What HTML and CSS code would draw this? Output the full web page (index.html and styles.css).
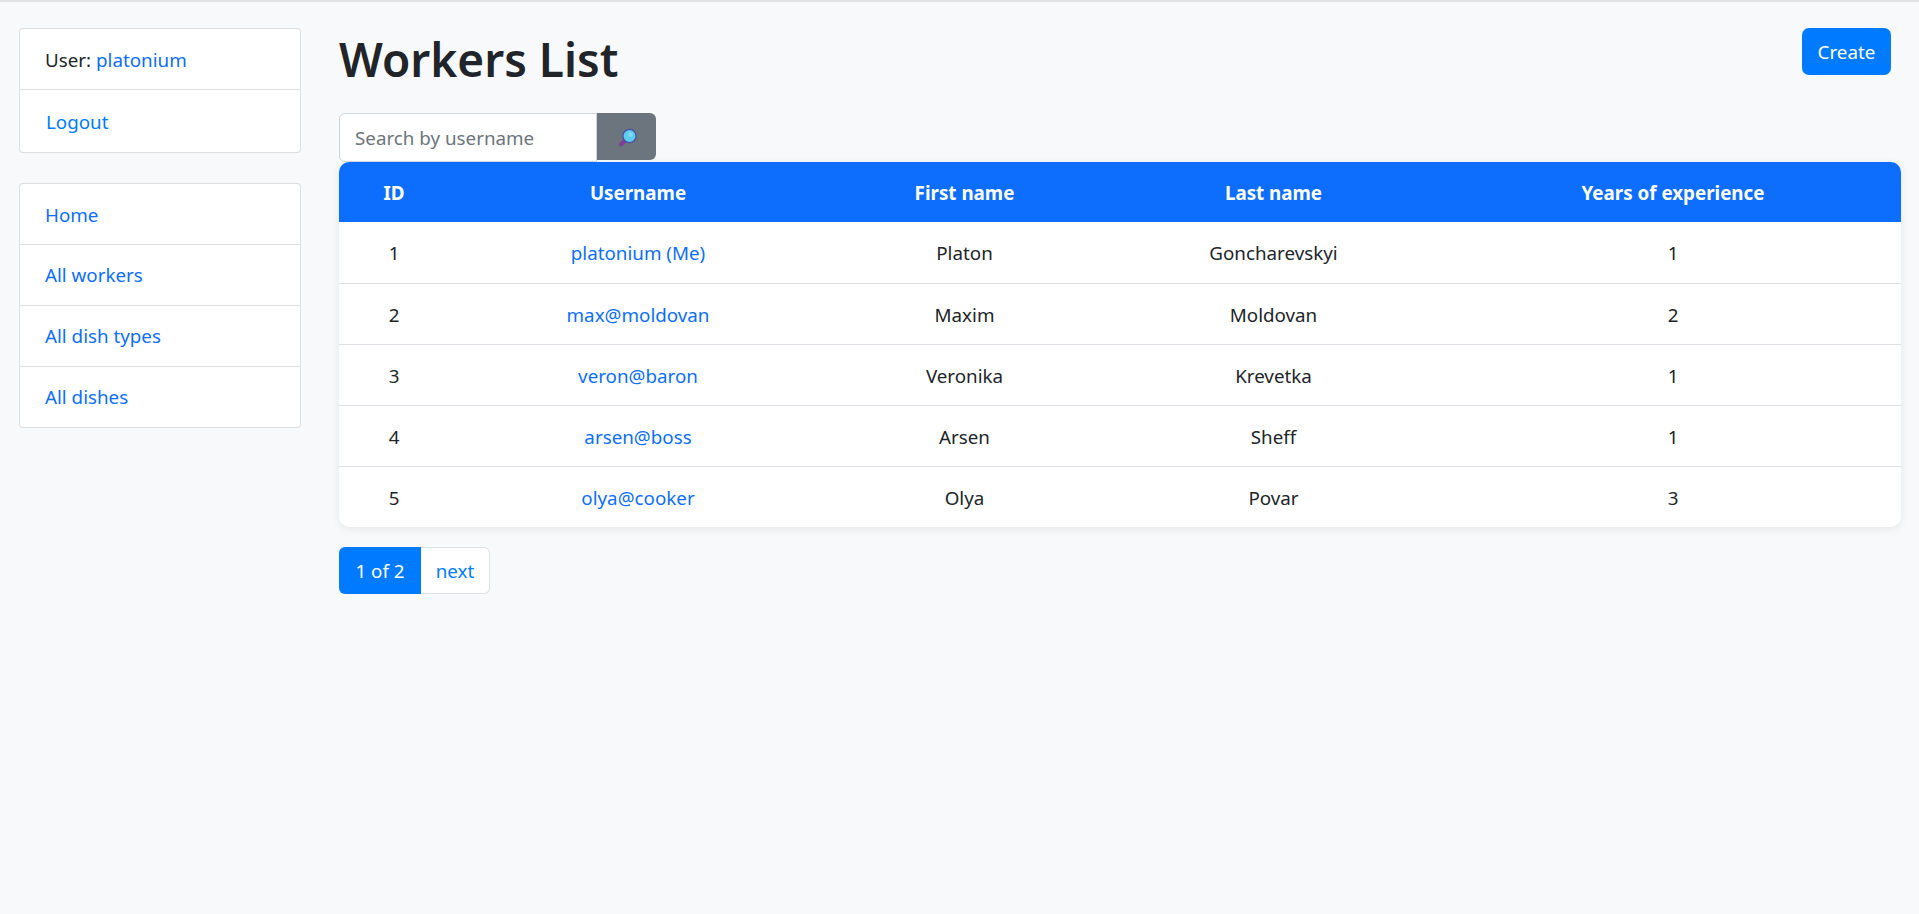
FILE: index.html
```html
<!DOCTYPE html>
<html lang="en">
<head>
<meta charset="utf-8">
<title>Workers List</title>
<link rel="stylesheet" href="styles.css">
</head>
<body>
<div class="page">
  <aside class="sidebar">
    <ul class="list-group">
      <li class="item">User: <a href="#">platonium</a></li>
      <li class="item item-tall"><a class="bright nudge" href="#">Logout</a></li>
    </ul>
    <ul class="list-group">
      <li class="item"><a href="#">Home</a></li>
      <li class="item"><a href="#">All workers</a></li>
      <li class="item"><a href="#">All dish types</a></li>
      <li class="item"><a href="#">All dishes</a></li>
    </ul>
  </aside>
  <main class="content">
    <div class="head">
      <h1 class="title">Workers List</h1>
      <a class="btn-create" href="#">Create</a>
    </div>
    <form class="search">
      <input class="search-input" type="text" placeholder="Search by username">
      <button class="search-btn" type="button" aria-label="Search">
        <svg width="24" height="24" viewBox="0 0 24 24">
          <path d="M10 15.5 L6 19.5" stroke="#7d3f96" stroke-width="4.2" stroke-linecap="round" fill="none"/>
          <circle cx="14.5" cy="11" r="6.6" fill="#5ccdf0" stroke="#4b4fa3" stroke-width="1.3"/>
          <circle cx="15.6" cy="9.6" r="2.4" fill="#7fdbf5"/>
        </svg>
      </button>
    </form>
    <div class="table-wrap">
      <table class="table">
        <colgroup>
          <col class="c1"><col class="c2"><col class="c3"><col class="c4"><col class="c5">
        </colgroup>
        <thead>
          <tr><th>ID</th><th>Username</th><th>First name</th><th>Last name</th><th>Years of experience</th></tr>
        </thead>
        <tbody>
          <tr><td>1</td><td><a href="#">platonium (Me)</a></td><td>Platon</td><td>Goncharevskyi</td><td>1</td></tr>
          <tr><td>2</td><td><a href="#">max@moldovan</a></td><td>Maxim</td><td>Moldovan</td><td>2</td></tr>
          <tr><td>3</td><td><a href="#">veron@baron</a></td><td>Veronika</td><td>Krevetka</td><td>1</td></tr>
          <tr><td>4</td><td><a href="#">arsen@boss</a></td><td>Arsen</td><td>Sheff</td><td>1</td></tr>
          <tr><td>5</td><td><a href="#">olya@cooker</a></td><td>Olya</td><td>Povar</td><td>3</td></tr>
        </tbody>
      </table>
    </div>
    <div class="pager">
      <span class="page-current">1 of 2</span>
      <a class="page-next" href="#">next</a>
    </div>
  </main>
</div>
</body>
</html>
```
FILE: styles.css
```css
* { box-sizing: border-box; }
html, body { margin: 0; height: 100%; }
body {
  background: #f8f9fa;
  color: #212529;
  font-family: "Noto Sans", "Open Sans", sans-serif;
  font-size: 18.8px;
  line-height: 27px;
  border-top: 2px solid #e3e3e3;
  overflow: hidden;
}
a { color: #0d6efd; text-decoration: none; }
.page { display: flex; align-items: flex-start; padding: 26px 16px 0 19px; }
.sidebar { width: 282px; flex: none; display: flex; flex-direction: column; gap: 30px; margin-right: 38px; }
.list-group { list-style: none; margin: 0; padding: 0; background: #fff; border: 1px solid rgba(0,0,0,.125); border-radius: 4px; }
.item { height: 61px; padding: 17px 25px 0; border-top: 1px solid rgba(0,0,0,.125); }
.item:first-child { border-top: 0; height: 60px; padding-top: 18px; }
.item-tall { height: 63px; padding-top: 19px; }
.bright { color: #007bff; }
.nudge { margin-left: 1px; }
.content { flex: 1; min-width: 0; }
.head { display: flex; justify-content: space-between; align-items: flex-start; height: 85px; }
.title { margin: 0; font-size: 46px; line-height: 62px; font-weight: 600; }
.btn-create { margin: 0 12px 0 0; width: 89px; height: 47px; padding-top: 11px; text-align: center; background: #007bff; color: #fff; border-radius: 7px; }
.search { display: flex; height: 49px; }
.search-input { width: 258px; height: 49px; padding: 0 15px; border: 1px solid #ced4da; border-radius: 6px 0 0 6px; background: #fff; font: inherit; color: #212529; outline: 0; }
.search-input::placeholder { color: #6c757d; opacity: 1; }
.search-btn { width: 59px; height: 47px; padding: 0; border: 0; border-radius: 0 6px 6px 0; background: #6c757d; display: flex; align-items: center; justify-content: center; }
.table-wrap { width: 1562px; border-radius: 10px; overflow: hidden; background: #fff; box-shadow: 0 2px 10px rgba(0,0,0,.08); }
.table { width: 100%; border-collapse: collapse; table-layout: fixed; }
.c1 { width: 110px; } .c2 { width: 378px; } .c3 { width: 275px; } .c4 { width: 343px; } .c5 { width: 456px; }
th { height: 60px; padding: 2px 0 0; background: #0d6efd; color: #fff; font-weight: 700; text-align: center; }
td { height: 61px; padding: 3px 0 0; text-align: center; border-top: 1px solid #dee2e6; }
tbody tr:first-child td { border-top: 0; }
.pager { display: flex; margin-top: 20px; }
.page-current { width: 82px; height: 47px; padding-top: 11px; text-align: center; background: #007bff; color: #fff; border-radius: 6px 0 0 6px; }
.page-next { width: 69px; height: 47px; padding-top: 10px; text-align: center; background: #fff; color: #007bff; border: 1px solid #dee2e6; border-left: 0; border-radius: 0 6px 6px 0; }
```
